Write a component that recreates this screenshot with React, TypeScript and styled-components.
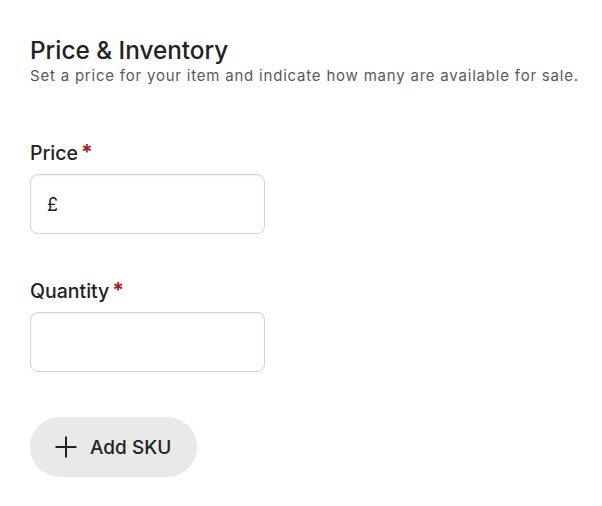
import React from 'react'
import styled, { createGlobalStyle } from 'styled-components'

const GlobalStyle = createGlobalStyle`
  body {
    margin: 0;
    background: #fff;
    font-family: Inter, "Noto Sans", sans-serif;
    color: #222;
  }
`

const Page = styled.div`
  padding: 35px 30px 30px;
`

const Header = styled.div`
  margin-bottom: 55px;
`

const Title = styled.h2`
  margin: 0;
  font-size: 24.3px;
  font-weight: 500;
  line-height: 30px;
  color: #222;
`

const Subtitle = styled.p`
  margin: 1px 0 0;
  font-size: 15px;
  line-height: 20px;
  letter-spacing: 0.79px;
  white-space: nowrap;
  color: #595959;
`

const Field = styled.div`
  margin-bottom: 45px;
`

const Label = styled.label`
  display: flex;
  align-items: flex-start;
  gap: 3px;
  font-size: 19.5px;
  font-weight: 500;
  line-height: 24px;
  color: #222;
  margin-bottom: 9px;
`

const Required = styled.span`
  color: #a61a2e;
  font-weight: 700;
  font-size: 21px;
`

const InputBox = styled.div`
  display: flex;
  align-items: center;
  box-sizing: border-box;
  width: 235px;
  height: 60px;
  padding: 0 16px;
  border: 1px solid #d3d3d3;
  border-radius: 8px;
  box-shadow: inset 0 1px 2px rgba(0, 0, 0, 0.06);
  font-size: 18px;
  color: #222;
`

const Input = styled.input`
  flex: 1;
  min-width: 0;
  border: none;
  outline: none;
  background: transparent;
  font: inherit;
  color: inherit;
  padding: 0;
`

const AddButton = styled.button`
  display: flex;
  align-items: center;
  gap: 12px;
  height: 60px;
  padding: 0 26px 0 24px;
  border: none;
  border-radius: 30px;
  background: #e9e9e9;
  font-family: inherit;
  font-size: 19px;
  font-weight: 500;
  color: #222;
  cursor: pointer;
`

const PlusIcon = () => (
  <svg width="24" height="24" viewBox="0 0 24 24" fill="none">
    <path d="M12 1.5v21M1.5 12h21" stroke="#222" strokeWidth="2" />
  </svg>
)

const App: React.FC = () => {
  return (
    <Page>
      <GlobalStyle />
      <Header>
        <Title>Price &amp; Inventory</Title>
        <Subtitle>Set a price for your item and indicate how many are available for sale.</Subtitle>
      </Header>
      <Field>
        <Label>
          Price<Required>*</Required>
        </Label>
        <InputBox>
          £<Input />
        </InputBox>
      </Field>
      <Field>
        <Label>
          Quantity<Required>*</Required>
        </Label>
        <InputBox>
          <Input />
        </InputBox>
      </Field>
      <AddButton>
        <PlusIcon />
        Add SKU
      </AddButton>
    </Page>
  )
}

export default App
